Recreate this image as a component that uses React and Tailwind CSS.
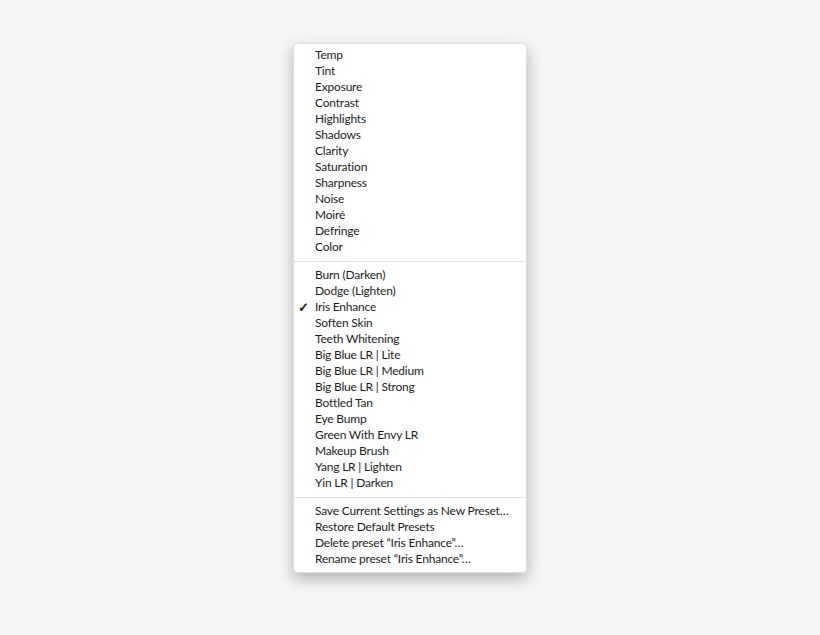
import React from 'react';

// Preset menu groups
const adjustments = [
  'Temp', 'Tint', 'Exposure', 'Contrast', 'Highlights', 'Shadows', 'Clarity',
  'Saturation', 'Sharpness', 'Noise', 'Moiré', 'Defringe', 'Color',
];

const presets = [
  'Burn (Darken)', 'Dodge (Lighten)', 'Iris Enhance', 'Soften Skin', 'Teeth Whitening',
  'Big Blue LR | Lite', 'Big Blue LR | Medium', 'Big Blue LR | Strong', 'Bottled Tan',
  'Eye Bump', 'Green With Envy LR', 'Makeup Brush', 'Yang LR | Lighten', 'Yin LR | Darken',
];

const actions = [
  'Save Current Settings as New Preset…',
  'Restore Default Presets',
  'Delete preset “Iris Enhance”…',
  'Rename preset “Iris Enhance”…',
];

function MenuItem({ label, checked = false }) {
  return (
    <div className="relative h-4 flex items-center pl-[21px] pr-4 leading-4 whitespace-nowrap">
      {checked && (
        <span className="absolute left-[4px] top-0 text-[13px] leading-4 font-bold">✓</span>
      )}
      {label}
    </div>
  );
}

function Divider() {
  return <div className="my-[5.5px] h-px bg-[#e2e2e2]" />;
}

export default function App() {
  return (
    <div
      className="min-h-[635px] w-full bg-[#f6f6f6] flex justify-center pt-[43px]"
      style={{ fontFamily: 'Lato, "Open Sans", sans-serif' }}
    >
      <div className="w-[234px] h-[530px] bg-white rounded-[4px] border border-[#dedede] shadow-[0_6px_16px_rgba(0,0,0,0.28)] pt-[3px] pb-[5px] text-[12px] tracking-[-0.2px] text-[#1c1c1c]">
        {adjustments.map((a) => (
          <MenuItem key={a} label={a} />
        ))}
        <Divider />
        {presets.map((p) => (
          <MenuItem key={p} label={p} checked={p === 'Iris Enhance'} />
        ))}
        <Divider />
        {actions.map((a) => (
          <MenuItem key={a} label={a} />
        ))}
      </div>
    </div>
  );
}
